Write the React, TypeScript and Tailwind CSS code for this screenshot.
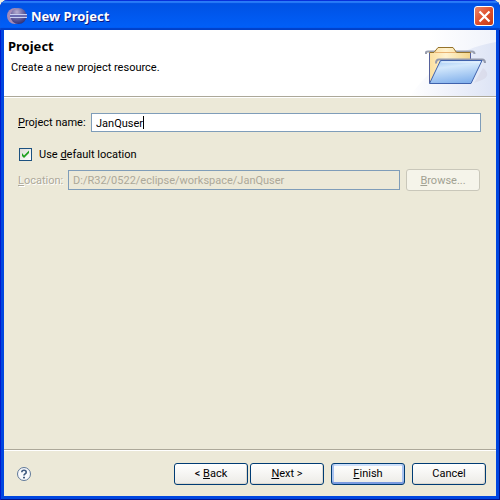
import { useState } from 'react'
import type { ReactNode } from 'react'

function EclipseIcon() {
    return (
        <svg className="h-5 w-5 shrink-0" viewBox="0 0 20 20" aria-hidden="true">
            <defs>
                <radialGradient id="sphere" cx="0.4" cy="0.25" r="0.8">
                    <stop offset="0" stopColor="#b8aed0" />
                    <stop offset="0.45" stopColor="#716ca8" />
                    <stop offset="1" stopColor="#2b2a72" />
                </radialGradient>
            </defs>
            <circle cx="8" cy="10" r="8" fill="#a58bb8" />
            <circle cx="11.500" cy="10" r="8" fill="url(#sphere)" />
            <path d="M3 8.500H20M3 11.500H20" stroke="#c9d0f2" strokeWidth="1" />
            <path d="M3 10H20" stroke="#6a6ab0" strokeWidth="2" />
        </svg>
    )
}

function FolderBanner() {
    return (
        <svg className="h-full w-[96px] shrink-0" viewBox="0 0 96 66" aria-hidden="true">
            <defs>
                <linearGradient id="bannerSweep" x1="0" y1="0" x2="1" y2="0">
                    <stop offset="0" stopColor="#ffffff" />
                    <stop offset="0.5" stopColor="#eef1fa" />
                    <stop offset="1" stopColor="#dde4f5" />
                </linearGradient>
                <linearGradient id="bannerGlow" x1="0" y1="0" x2="1" y2="0">
                    <stop offset="0.3" stopColor="#ffffff" />
                    <stop offset="1" stopColor="#f0f3fb" />
                </linearGradient>
                <linearGradient id="folderBack" x1="0" y1="0" x2="1" y2="0">
                    <stop offset="0" stopColor="#fbdf9e" />
                    <stop offset="0.4" stopColor="#fff2d0" />
                    <stop offset="1" stopColor="#f3d68c" />
                </linearGradient>
                <linearGradient id="folderFront" x1="0.2" y1="0" x2="0.5" y2="1">
                    <stop offset="0" stopColor="#a4cbf5" />
                    <stop offset="0.3" stopColor="#d3e8fc" />
                    <stop offset="1" stopColor="#84b2ec" />
                </linearGradient>
            </defs>
            <rect width="96" height="66" fill="url(#bannerGlow)" />
            <path d="M10 66C28 40 56 19 96 12V66Z" fill="url(#bannerSweep)" />
            <path d="M74 53L83 38Q92 45 82 50Z" fill="#c9c3d4" opacity="0.3" />
            <path d="M26 24V22.500Q26 21.500 28 21.500H72Q74.500 21.500 74.500 24" fill="none" stroke="#9aa0b0" strokeWidth="2" />
            <path d="M29.500 53V22.500H34L38 17.500H53L56.500 22.500H70.500V48L67 53Z" fill="url(#folderBack)" stroke="#94722b" />
            <path d="M29.500 53V23M70.500 23V30" stroke="#56619b" />
            <path d="M35 22.500H56" stroke="#e9b474" />
            <path d="M36 33.500Q36 29.500 39 29.500H82Q85 29.500 85 33" fill="none" stroke="#9399ad" strokeWidth="2" />
            <path d="M40.500 30.500H82L71 53.500H29.500Z" fill="url(#folderFront)" stroke="#3f62ad" />
            <path d="M41.500 32H80" stroke="#f0f8ff" />
        </svg>
    )
}

function HelpIcon() {
    return (
        <svg className="h-4 w-4" viewBox="0 0 16 16" aria-hidden="true">
            <circle cx="8" cy="8" r="6.500" fill="#f7f8fb" stroke="#5f7898" />
            <path d="M5.800 6.300Q5.800 4.300 8 4.300T10.200 6.200Q10.200 7.300 8.900 7.900Q8 8.400 8 9.600" fill="none" stroke="#3f5a80" strokeWidth="1.600" />
            <rect x="7" y="10.800" width="2" height="1.600" fill="#3f5a80" />
        </svg>
    )
}

const buttonBase = 'h-[22px] w-[74px] rounded-[3px] border pt-px text-center leading-4'

function DialogButton({ children, isDefault = false }: { children: ReactNode; isDefault?: boolean }) {
    return (
        <button
            type="button"
            className={`${buttonBase} border-[#003c74] bg-linear-to-b from-white to-[#ecebe6] ${
                isDefault ? 'shadow-[inset_0_-2px_0_#7b9be0,inset_2px_0_0_#a9c3f0,inset_-2px_0_0_#a9c3f0,inset_0_2px_0_#cee0fb]' : 'shadow-[inset_-1px_-1px_0_#dcd8ce]'
            }`}
        >
            {children}
        </button>
    )
}

export default function App() {
    const [projectName, setProjectName] = useState('JanQuser')
    const [useDefault, setUseDefault] = useState(true)

    return (
        <div className="bg-[#f0eee2] font-[Roboto,sans-serif] text-[11px] leading-4 text-black">
            <div className="flex min-h-screen flex-col overflow-hidden rounded-t-lg bg-[#0046e0] px-1 pb-1 shadow-[inset_1px_0_0_#0019cf,inset_-1px_-1px_0_#00138c]">
                {/* Title bar */}
                <div className="-mx-1 flex h-[30px] items-center bg-linear-to-b from-[#0050e0] via-[#0058ee] to-[#0060fa] pt-[2px] pr-[6px] pl-[7px] shadow-[inset_0_1px_0_#0831d9,inset_0_3px_1px_#2a7cf8,inset_0_-2px_1px_#0040c8]">
                    <EclipseIcon />
                    <h1 className="ml-1 flex-1 font-['Noto_Sans',sans-serif] text-[13px] font-bold text-white [text-shadow:1px_1px_0_#0a1883]">New Project</h1>
                    <button type="button" aria-label="Close" className="flex h-5 w-5 items-center justify-center rounded-[3px] border border-white bg-linear-to-br from-[#ea8468] via-[#e0502d] to-[#c43a15]">
                        <svg className="h-[13px] w-[13px]" viewBox="0 0 13 13" aria-hidden="true">
                            <path d="M1.500 1.500L11.500 11.500M11.500 1.500L1.500 11.500" stroke="#fff" strokeWidth="2.200" />
                        </svg>
                    </button>
                </div>

                {/* Banner */}
                <header className="flex h-[67px] border-b border-[#aca899] bg-white">
                    <div className="flex-1 pt-2 pl-1">
                        <h2 className="font-['Noto_Sans',sans-serif] text-[13px] font-bold">Project</h2>
                        <p className="mt-[6px] ml-[3px]">Create a new project resource.</p>
                    </div>
                    <FolderBanner />
                </header>

                {/* Form */}
                <main className="flex-1 border-t border-white bg-[#ece9d8] pt-[15px] pr-[15px] pl-[14px]">
                    <div className="flex items-center">
                        <label htmlFor="project-name" className="w-[73px] pt-px">
                            <u>P</u>roject name:
                        </label>
                        <div className="relative flex-1">
                            <input
                                id="project-name"
                                type="text"
                                value={projectName}
                                onChange={(e) => setProjectName(e.target.value)}
                                className="block h-[19px] w-full border border-[#7f9db9] bg-white px-1 pt-px outline-none"
                            />
                            <span className="absolute top-[3px] left-[52px] h-[13px] w-px bg-black" />
                        </div>
                    </div>

                    <div className="mt-[14px] flex items-center">
                        <input
                            id="use-default"
                            type="checkbox"
                            checked={useDefault}
                            onChange={(e) => setUseDefault(e.target.checked)}
                            className="peer ml-px h-[13px] w-[13px] appearance-none border border-[#1c5180] bg-linear-to-br from-[#dcdcd7] to-white"
                        />
                        <svg className="pointer-events-none invisible -ml-[13px] h-[13px] w-[13px] peer-checked:visible" viewBox="0 0 13 13" aria-hidden="true">
                            <path d="M3 5V8L5 10L10 5V2.500L5 7.500Z" fill="#21a121" />
                        </svg>
                        <label htmlFor="use-default" className="ml-[7px] pt-px">
                            Use <u>d</u>efault location
                        </label>
                    </div>

                    <div className="mt-[6px] flex items-center">
                        <label htmlFor="location" className="w-[50px] pt-px text-[#aca899] [text-shadow:1px_1px_0_#fff]">
                            <u>L</u>ocation:
                        </label>
                        <input
                            id="location"
                            type="text"
                            disabled={useDefault}
                            defaultValue="D:/R32/0522/eclipse/workspace/JanQuser"
                            className="h-5 min-w-0 flex-1 border border-[#7f9db9] bg-[#ece9d8] px-1 text-[#aca899]"
                        />
                        <button type="button" disabled={useDefault} className={`${buttonBase} mr-px ml-[6px] border-[#c9c7ba] bg-[#f5f4ea] text-[#a1a192]`}>
                            <u>B</u>rowse...
                        </button>
                    </div>
                </main>

                {/* Button bar */}
                <footer className="border-t border-[#aca899] bg-[#ece9d8]">
                    <div className="flex h-[46px] items-center gap-[7px] border-t border-white pr-[10px] pl-3">
                        <button type="button" aria-label="Help" className="mr-auto">
                            <HelpIcon />
                        </button>
                        <div className="flex gap-[2px]">
                            <DialogButton>
                                &lt; <u>B</u>ack
                            </DialogButton>
                            <DialogButton>
                                <u>N</u>ext &gt;
                            </DialogButton>
                        </div>
                        <DialogButton isDefault>
                            <u>F</u>inish
                        </DialogButton>
                        <DialogButton>Cancel</DialogButton>
                    </div>
                </footer>
            </div>
        </div>
    )
}
